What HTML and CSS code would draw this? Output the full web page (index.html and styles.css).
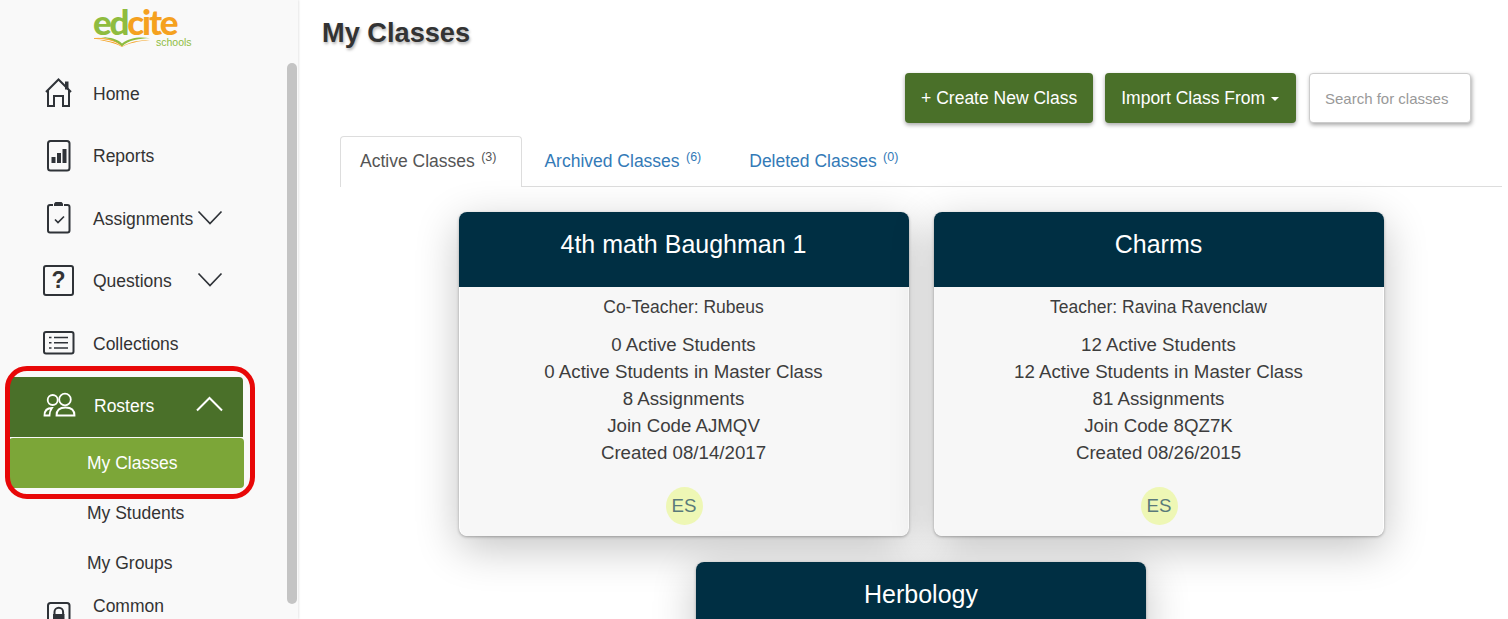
FILE: index.html
```html
<!DOCTYPE html>
<html lang="en">
<head>
<meta charset="utf-8">
<title>My Classes</title>
<link rel="stylesheet" href="styles.css">
</head>
<body>
<div class="app">
  <aside class="sidebar">
    <div class="logo">
      <div class="logo-word"><span class="logo-ed">ed</span><span class="logo-cite">cite</span></div>
      <div class="logo-sub">
        <svg class="logo-book" viewBox="0 0 58 10" width="58" height="10" aria-hidden="true">
          <path d="M1 1.500C12 1 22 3 29 9C26 4.500 15 .5 1 1.500Z" fill="#f5a11f" stroke="#f5a11f" stroke-width=".6"/>
          <path d="M8 .3C16 0 25 2 29 6.500C36 1 46 -.3 57 1.200C47 1.200 35 3 29 9.500C24 4 16 1.400 8 .3Z" fill="#8fbc3f"/>
          <path d="M57 3C46 3 36 5 29 9.600C23 5 13 3 3 2.600C13 4 22 6 29 10C36 6 46 4 57 3Z" fill="#f5a11f"/>
        </svg>
        <span class="logo-schools">schools</span>
      </div>
    </div>
    <nav class="nav">
      <a class="nav-item">
        <svg class="nav-icon" viewBox="0 0 32 32" aria-hidden="true"><path d="M3 14L15.500 1.500L28 14M5 12V28H11V18H20V28H26V12" fill="none" stroke="#2f3338" stroke-width="2"/><path d="M22 3.500h3.500v8h-3.500z" fill="#2f3338"/></svg>
        <span>Home</span>
      </a>
      <a class="nav-item">
        <svg class="nav-icon" viewBox="0 0 32 32" aria-hidden="true"><rect x="5" y="0" width="21.500" height="29.500" rx="2.500" fill="none" stroke="#2f3338" stroke-width="2"/><path d="M8.500 16h4v6h-4z M14 12h4v10h-4z M19.500 8h4v14h-4z" fill="#2f3338"/></svg>
        <span>Reports</span>
      </a>
      <a class="nav-item">
        <svg class="nav-icon" viewBox="0 0 32 32" aria-hidden="true"><path d="M10 2H7A2 2 0 0 0 5 4V27.500A2 2 0 0 0 7 29.500H24.500A2 2 0 0 0 26.500 27.500V4A2 2 0 0 0 24.500 2H21" fill="none" stroke="#2f3338" stroke-width="2"/><path d="M11 3V.5L12.500 -1H18.500L20 .5V3Z" fill="#2f3338"/><path d="M12 16.500L15 19.500L21 13.500" fill="none" stroke="#2f3338" stroke-width="1.700"/></svg>
        <span>Assignments</span>
        <svg class="chevron" viewBox="0 0 26 16" aria-hidden="true"><path d="M1.500 1.500L13 13.500L24.500 1.500" fill="none" stroke="#2f3338" stroke-width="1.700"/></svg>
      </a>
      <a class="nav-item">
        <span class="nav-question">?</span>
        <span>Questions</span>
        <svg class="chevron" viewBox="0 0 26 16" aria-hidden="true"><path d="M1.500 1.500L13 13.500L24.500 1.500" fill="none" stroke="#2f3338" stroke-width="1.700"/></svg>
      </a>
      <a class="nav-item">
        <svg class="nav-icon" viewBox="0 0 32 32" aria-hidden="true"><rect x="1" y="4" width="29.500" height="21.500" rx="2" fill="none" stroke="#2f3338" stroke-width="2"/><path d="M6 9.500h2.500M11 9.500h14M6 14.700h2.500M11 14.700h14M6 20h2.500M11 20h14" fill="none" stroke="#2f3338" stroke-width="1.500"/></svg>
        <span>Collections</span>
      </a>
      <a class="nav-item nav-item-open">
        <svg class="nav-icon" viewBox="0 0 32 32" aria-hidden="true"><g fill="none" stroke="#fff" stroke-width="1.800"><circle cx="9.700" cy="10" r="5"/><circle cx="22" cy="9.500" r="5.800"/><path d="M1.500 25.500C1.500 21 4 18 9 18C7.500 20 6.500 22 6.500 25.500Z"/><path d="M13.500 25.500C13.500 20 17 17.500 22.500 17.500C28 17.500 31.500 20 31.500 25.500Z"/></g></svg>
        <span class="nav-open-label">Rosters</span>
        <svg class="chevron chevron-up" viewBox="0 0 26 16" aria-hidden="true"><path d="M0 14.500L12.500 2L25 14.500" fill="none" stroke="#fff" stroke-width="2"/></svg>
      </a>
      <a class="sub-item sub-item-active">My Classes</a>
      <a class="sub-item">My Students</a>
      <a class="sub-item">My Groups</a>
      <a class="nav-item nav-item-top">
        <svg class="nav-icon" viewBox="0 0 32 32" aria-hidden="true"><rect x="5" y="1" width="21.500" height="30" rx="2.500" fill="none" stroke="#2f3338" stroke-width="2"/><path d="M11.500 13V10a4.300 4.300 0 0 1 8.600 0V13" fill="none" stroke="#2f3338" stroke-width="2"/><rect x="10" y="12" width="11.500" height="9" fill="#2f3338"/></svg>
        <span>Common</span>
      </a>
    </nav>
    <div class="scroll-thumb"></div>
  </aside>
  <main class="main">
    <h1 class="title">My Classes</h1>
    <div class="toolbar">
      <button class="btn">+ Create New Class</button>
      <button class="btn">Import Class From <i class="caret"></i></button>
      <input class="search" type="text" placeholder="Search for classes">
    </div>
    <ul class="tabs">
      <li class="tab tab-active">Active Classes <sup>(3)</sup></li>
      <li class="tab">Archived Classes <sup>(6)</sup></li>
      <li class="tab">Deleted Classes <sup>(0)</sup></li>
    </ul>
    <div class="cards">
      <article class="card">
        <h2 class="card-head">4th math Baughman 1</h2>
        <div class="card-body">
          <p class="card-teacher">Co-Teacher: Rubeus</p>
          <p class="card-line">0 Active Students</p>
          <p class="card-line">0 Active Students in Master Class</p>
          <p class="card-line">8 Assignments</p>
          <p class="card-line">Join Code AJMQV</p>
          <p class="card-line">Created 08/14/2017</p>
          <span class="avatar">ES</span>
        </div>
      </article>
      <article class="card">
        <h2 class="card-head">Charms</h2>
        <div class="card-body">
          <p class="card-teacher">Teacher: Ravina Ravenclaw</p>
          <p class="card-line">12 Active Students</p>
          <p class="card-line">12 Active Students in Master Class</p>
          <p class="card-line">81 Assignments</p>
          <p class="card-line">Join Code 8QZ7K</p>
          <p class="card-line">Created 08/26/2015</p>
          <span class="avatar">ES</span>
        </div>
      </article>
      <article class="card">
        <h2 class="card-head">Herbology</h2>
      </article>
    </div>
  </main>
  <div class="annotation"></div>
</div>
</body>
</html>
```
FILE: styles.css
```css
* { box-sizing: border-box; }
html, body { margin: 0; height: 100%; overflow: hidden; background: #fff; }
body { font-family: "Liberation Sans", Arial, sans-serif; font-size: 17.5px; color: #333; }
.app { position: relative; display: flex; height: 619px; overflow: hidden; }

.sidebar { position: relative; flex: 0 0 298px; height: 619px; overflow: hidden; background: #f9f9f9; box-shadow: 1px 0 2px rgba(0,0,0,.1); z-index: 1; }
.logo { height: 63px; padding: 7px 0 0 93px; }
.logo-word { font-family: Lato, sans-serif; font-weight: 900; font-size: 35px; line-height: 29px; height: 29px; letter-spacing: -2.200px; }
.logo-ed { color: #8fbc3f; }
.logo-cite { color: #f5a11f; }
.logo-sub { display: flex; align-items: flex-end; gap: 5px; height: 11px; }
.logo-book { flex: none; }
.logo-schools { font-family: "Liberation Sans", sans-serif; font-size: 10.500px; line-height: 10px; color: #8fbc3f; }

.nav { display: flex; flex-direction: column; padding-left: 9px; width: 234px; box-sizing: content-box; }
.nav-item { display: flex; align-items: center; height: 62.5px; padding: 0 20px 0 34px; color: #333; flex: none; }
.nav-item span { flex: none; }
.nav-icon { width: 32px; height: 32px; flex: none; margin-right: 18px; overflow: visible; }
.nav-question { width: 31px; height: 31px; margin: -2px 19px 0 0; border: 2px solid #2f3338; border-radius: 3px; font-weight: 700; font-size: 23px; line-height: 27px; text-align: center; }
.chevron { width: 26px; height: 16px; margin-left: auto; flex: none; margin-top: -3px; overflow: visible; }
.chevron-up { margin-top: -4px; }
.nav-item-open { height: 60px; margin-top: 1.500px; padding-bottom: 2px; background: #4a7029; color: #fff; border-radius: 4px 4px 0 0; }
.nav-open-label { margin-left: 1px; }
.sub-item { display: flex; align-items: center; height: 50px; flex: none; padding-left: 78px; color: #333; }
.sub-item-active { width: 235px; margin-top: 1px; background: #7ca638; color: #fff; border-radius: 4px; }
.nav-item-top { align-items: flex-start; padding-top: 8px; height: 40px; }
.nav-item-top .nav-icon { margin-top: 6px; }
.scroll-thumb { position: absolute; left: 287px; top: 63px; width: 10px; height: 541px; border-radius: 5px; background: #c4c4c4; }

.main { flex: 1; min-width: 0; padding: 0 0 0 24px; }
.title { margin: 0; height: 73px; padding-top: 16px; font-size: 27.200px; line-height: 34px; font-weight: 700; color: #333; text-shadow: 1px 2px 3px rgba(0,0,0,.3); }
.toolbar { display: flex; justify-content: flex-end; gap: 12px; padding-right: 37px; height: 50px; }
.btn { height: 50px; padding: 0 16px; border: 0; border-radius: 4px; background: #4a7029; color: #fff; font: inherit; box-shadow: 0 2px 4px rgba(0,0,0,.35); }
.caret { display: inline-block; width: 0; height: 0; margin-left: 1px; margin-right: 1px; vertical-align: middle; border-top: 4px solid #fff; border-left: 4.500px solid transparent; border-right: 4.500px solid transparent; }
.search { width: 162px; height: 50px; margin-left: 1px; padding: 0 15px; border: 1px solid #ccc; border-radius: 4px; background: #fff; font: inherit; font-size: 15px; color: #333; box-shadow: 1px 2px 4px rgba(0,0,0,.35); outline: 0; }
.search::placeholder { color: #999; opacity: 1; }

.tabs { display: flex; list-style: none; margin: 13px 6px 0 18px; padding: 0; height: 51px; border-bottom: 1px solid #ddd; }
.tab { height: 51px; padding: 14px 25px 0 21px; line-height: 21px; color: #337ab7; border: 1px solid transparent; border-bottom: 0; flex: none; }
.tab sup { margin-left: 1.500px; font-size: 12.500px; line-height: 0; position: relative; top: -.5em; vertical-align: baseline; }
.tab-active { color: #555; background: #fff; border-color: #ddd; border-radius: 4px 4px 0 0; padding-left: 19px; }

.cards { display: flex; flex-wrap: wrap; justify-content: center; gap: 26px 25px; margin: 25px 6px 0 18px; }
.card { width: 450px; border-radius: 8px; box-shadow: 0 12px 44px rgba(0,0,0,.24), 0 1px 3px rgba(0,0,0,.3); }
.card-head { margin: 0; height: 75px; padding-top: 16px; background: #002f43; border-radius: 8px 8px 0 0; color: #fff; font-size: 25px; font-weight: 400; line-height: 32px; text-align: center; }
.card-body { height: 249px; margin: 0 1px; padding-top: 9px; display: flex; flex-direction: column; align-items: center; text-align: center; background: #f7f7f7; border-radius: 0 0 8px 8px; color: #3d3d3d; }
.card-body p { margin: 0; }
.card-teacher { line-height: 22px; margin-bottom: 13px !important; }
.card-line { font-size: 18.700px; line-height: 27px; }
.avatar { width: 37px; height: 38px; margin: 21px 0 0 1px; border-radius: 50%; background: #eef7b5; color: #5a7a7a; font-size: 18.700px; line-height: 38px; text-align: center; }

.annotation { position: absolute; left: 5px; top: 366px; width: 250px; height: 133px; border: 5px solid #e80808; border-radius: 22px; z-index: 2; pointer-events: none; }
```
